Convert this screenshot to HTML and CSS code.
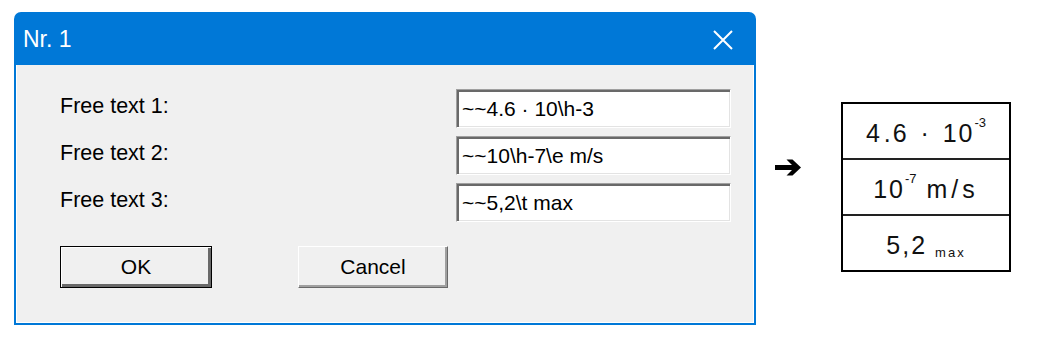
FILE: index.html
```html
<!DOCTYPE html>
<html lang="de">
<head>
	<meta charset="utf-8"/>
	<title>Nr. 1</title>
	<link rel="stylesheet" href="styles.css">
</head>
<body>

<div class="page">

  <!--Dialog-->
  <div class="window">
    <div class="titlebar">
      <span class="title">Nr. 1</span>
      <svg class="close" width="20" height="20" viewBox="0 0 20 20">
        <path d="M1 1 L19 19 M19 1 L1 19" stroke="#fff" stroke-width="2" fill="none"/>
      </svg>
    </div>
    <div class="client">
      <div class="fields">
        <span class="field-label">Free text 1:</span>
        <div class="textbox">~~4.6 · 10\h-3</div>
        <span class="field-label">Free text 2:</span>
        <div class="textbox">~~10\h-7\e m/s</div>
        <span class="field-label">Free text 3:</span>
        <div class="textbox">~~5,2\t max</div>
      </div>
      <div class="buttons">
        <a class="btn btn_default" href="javascript:void(0);">OK</a>
        <a class="btn btn_cancel" href="javascript:void(0);">Cancel</a>
      </div>
    </div>
  </div>

  <!--Pfeil-->
  <div class="arrow">
    <svg width="27" height="17" viewBox="0 0 27 17">
      <path d="M0 6 H17 L11.5 0.5 H17.5 L26 8.5 L17.5 16.5 H11.5 L17 11 H0 Z" fill="#000"/>
    </svg>
  </div>

  <!--Ergebnis-->
  <div class="result">
    <div class="result__row">4<span class="gap"></span>.6<span class="dot">·</span>10<sup class="result__sup">-3</sup></div>
    <div class="result__row">10<sup class="result__sup">-7</sup><span class="unit">m/s</span></div>
    <div class="result__row">5,2 <sub class="result__sub">max</sub></div>
  </div>

</div>

</body>
</html>
```

FILE: styles.css
```css
html,body{
	margin: 0;
	padding: 0;
	background: #fff;
}
.page{
	display: flex;
	align-items: flex-start;
	font-family: "Liberation Sans", Arial, sans-serif;
	color: #000;
}

/*Dialog*/
.window{
	margin: 12px 0 0 14px;
	width: 742px;
	box-sizing: border-box;
	background: #0078d7;
	padding: 0 2px 2px;
	border-radius: 7px 7px 0 0;
}
.titlebar{
	height: 53px;
	display: flex;
	align-items: center;
	justify-content: space-between;
	padding: 0 21px 0 7px;
}
.titlebar .title{
	color: #fff;
	font-size: 23px;
	margin-top: 1px;
}
.titlebar .close{
	display: block;
	margin-top: 2px;
}
.client{
	background: #f0f0f0;
	box-shadow: inset 1px 0 #fff, inset -1px 0 #fff, inset 0 -1px #fff;
	padding: 24px 0 35px 44px;
}
.fields{
	display: grid;
	grid-template-columns: 396px 275px;
	grid-auto-rows: 39px;
	row-gap: 8px;
	align-items: center;
}
.field-label{
	font-size: 21.5px;
	margin-top: -5px;
}
.textbox{
	height: 39px;
	box-sizing: border-box;
	background: #fff;
	border: 1px solid;
	border-color: #a0a0a0 #fff #fff #a0a0a0;
	box-shadow: inset 2px 2px #696969, inset -1px -1px #e3e3e3;
	font-size: 21px;
	line-height: 37px;
	padding-left: 5px;
	white-space: pre;
}
.buttons{
	display: flex;
	gap: 86px;
	margin-top: 24px;
}
.btn{
	display: block;
	height: 42px;
	box-sizing: border-box;
	background: #f0f0f0;
	color: #000;
	text-decoration: none;
	text-align: center;
	font-size: 21px;
	line-height: 40px;
	border: 1px solid;
	border-color: #fff #696969 #696969 #fff;
	box-shadow: inset -2px -2px #a0a0a0;
}
.btn_default{
	width: 152px;
	border-color: #000;
	box-shadow: inset 1px 1px #fff, inset -3px -3px #696969;
}
.btn_cancel{
	width: 150px;
}

/*Pfeil*/
.arrow{
	margin: 159px 0 0 19px;
}
.arrow svg{
	display: block;
}

/*Ergebnis*/
.result{
	margin: 102px 0 0 39px;
	width: 170px;
	box-sizing: border-box;
	border: 2px solid #000;
}
.result__row{
	height: 54px;
	display: flex;
	align-items: center;
	justify-content: center;
	padding-top: 4px;
	box-sizing: border-box;
	font-size: 25px;
	letter-spacing: 2px;
	color: #111;
}
.result__row + .result__row{
	border-top: 2px solid #222;
	height: 56px;
}
.result__row .gap{
	display: inline-block;
	width: 2px;
}
.result__row .dot{
	display: inline-block;
	width: 34px;
	text-align: center;
}
.result__row .unit{
	margin-left: 10px;
	letter-spacing: 4px;
}
.result__sup{
	font-size: 13px;
	letter-spacing: 0;
	align-self: flex-start;
	margin-top: 7px;
}
.result__sub{
	font-size: 13px;
	letter-spacing: 2px;
	align-self: flex-end;
	margin: 0 0 10px 8px;
}
```
